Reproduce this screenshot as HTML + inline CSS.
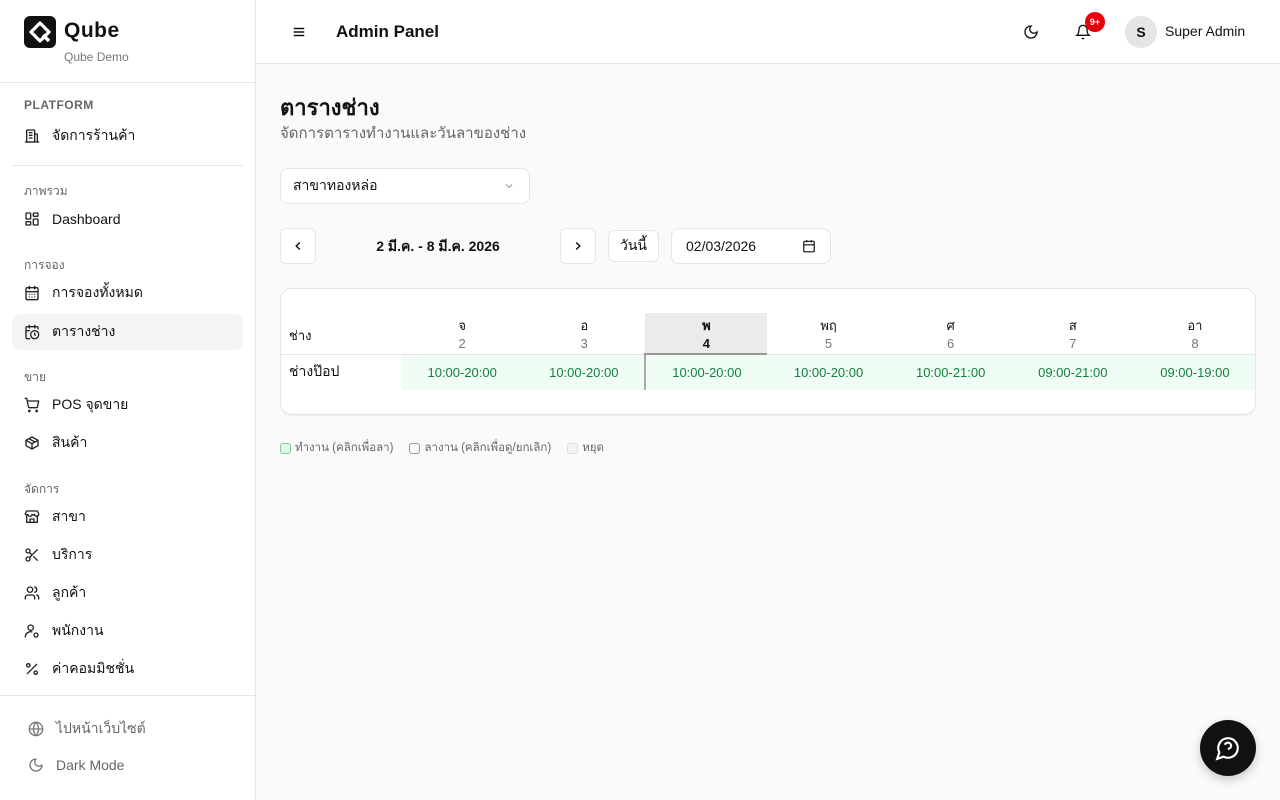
<!DOCTYPE html>
<html><head><meta charset="utf-8"><style>
*{box-sizing:border-box;margin:0;padding:0}
body{width:1280px;height:800px;font-family:"Liberation Sans","Noto Sans CJK SC",sans-serif;background:#fafafa;color:#111;position:relative;overflow:hidden}
.sb{position:absolute;left:0;top:0;width:256px;height:800px;background:#fff;border-right:1px solid #e5e5e5}
.logo{position:absolute;left:24px;top:16px;width:32px;height:32px;background:#111;border-radius:6px}
.brand{position:absolute;left:64px;top:19px;font-size:21px;font-weight:bold;letter-spacing:.5px}
.sub{position:absolute;left:64px;top:50px;font-size:12px;color:#777}
.hr{position:absolute;height:1px;background:#e5e5e5}
.sec{position:absolute;left:24px;font-size:12px;color:#666}
.it{position:absolute;left:12px;width:231px;height:36px;border-radius:8px;display:flex;align-items:center;padding-left:12px;font-size:14px;font-weight:500;color:#111}
.it svg{width:16px;height:16px;margin-right:12px;fill:none;stroke:#222;stroke-width:2;stroke-linecap:round;stroke-linejoin:round}
.it.act{background:#f4f4f5}
.it.g{color:#666}.it.g svg{stroke:#777}
.hd{position:absolute;left:256px;top:0;right:0;height:64px;background:#fff;border-bottom:1px solid #e5e5e5}
.main{position:absolute;left:280px}
.btn{position:absolute;background:#fff;border:1px solid #e5e5e5;border-radius:6px;display:flex;align-items:center;justify-content:center;font-size:14px}
table{border-collapse:collapse;position:absolute;left:0;top:24px;width:975px;table-layout:fixed}
td,th{text-align:center;font-size:13px;font-weight:normal}
.gr{background:#f0fdf4}
</style></head><body>
<div class="sb">
 <div class="logo"><svg width="32" height="32" viewBox="0 0 32 32"><path d="M16 7 L25 16 L16 25 L7 16Z" fill="none" stroke="#fff" stroke-width="3.2" stroke-linejoin="round"/><path d="M19 19 L25 25" stroke="#fff" stroke-width="3.5"/></svg></div>
 <div class="brand">Qube</div>
 <div class="sub">Qube Demo</div>
 <div class="hr" style="left:0;width:256px;top:82px"></div>
 <div class="sec" style="top:98px;font-weight:bold;letter-spacing:.5px">PLATFORM</div>
 <div class="it" style="top:118px"><svg viewBox="0 0 24 24"><rect x="4" y="3" width="12" height="18" rx="1"/><path d="M16 9h4v12h-4M8 7h4M8 11h4M8 15h4M2 21h20"/></svg>จัดการร้านค้า</div>
 <div class="hr" style="left:12px;width:231px;top:165px"></div>
 <div class="sec" style="top:182px">ภาพรวม</div>
 <div class="it" style="top:201px"><svg viewBox="0 0 24 24"><rect x="3" y="3" width="7" height="9" rx="1"/><rect x="14" y="3" width="7" height="5" rx="1"/><rect x="14" y="12" width="7" height="9" rx="1"/><rect x="3" y="16" width="7" height="5" rx="1"/></svg>Dashboard</div>
 <div class="sec" style="top:256px">การจอง</div>
 <div class="it" style="top:275px"><svg viewBox="0 0 24 24"><rect x="3" y="4" width="18" height="18" rx="2"/><path d="M16 2v4M8 2v4M3 10h18M8 14h.01M12 14h.01M16 14h.01M8 18h.01M12 18h.01M16 18h.01"/></svg>การจองทั้งหมด</div>
 <div class="it act" style="top:314px"><svg viewBox="0 0 24 24"><path d="M21 7.5V6a2 2 0 0 0-2-2H5a2 2 0 0 0-2 2v14a2 2 0 0 0 2 2h3.5M16 2v4M8 2v4M3 10h5"/><circle cx="16" cy="16" r="6"/><path d="M16 14v2l1 1"/></svg>ตารางช่าง</div>
 <div class="sec" style="top:368px">ขาย</div>
 <div class="it" style="top:387px"><svg viewBox="0 0 24 24"><circle cx="8" cy="21" r="1"/><circle cx="19" cy="21" r="1"/><path d="M2 2h2l2.6 12.4a2 2 0 0 0 2 1.6h9.7a2 2 0 0 0 2-1.6L22 6H5"/></svg>POS จุดขาย</div>
 <div class="it" style="top:425px"><svg viewBox="0 0 24 24"><path d="M21 8l-9-5-9 5v8l9 5 9-5z"/><path d="M3 8l9 5 9-5M12 13v8M7.5 5.5l9 5"/></svg>สินค้า</div>
 <div class="sec" style="top:480px">จัดการ</div>
 <div class="it" style="top:499px"><svg viewBox="0 0 24 24"><path d="M4 10v10h16V10M2 7l2-4h16l2 4v1a3 3 0 0 1-6 0 3 3 0 0 1-4 0 3 3 0 0 1-6 0 3 3 0 0 1-4 0z"/><path d="M9 20v-5h6v5"/></svg>สาขา</div>
 <div class="it" style="top:537px"><svg viewBox="0 0 24 24"><circle cx="6" cy="6" r="3"/><circle cx="6" cy="18" r="3"/><path d="M20 4L8.1 15.9M14.5 14.5L20 20M8.1 8.1L12 12"/></svg>บริการ</div>
 <div class="it" style="top:575px"><svg viewBox="0 0 24 24"><circle cx="9" cy="7" r="4"/><path d="M2 21v-2a4 4 0 0 1 4-4h6a4 4 0 0 1 4 4v2M16 3.1a4 4 0 0 1 0 7.8M22 21v-2a4 4 0 0 0-3-3.9"/></svg>ลูกค้า</div>
 <div class="it" style="top:613px"><svg viewBox="0 0 24 24"><circle cx="10" cy="7" r="4"/><path d="M2 21a8 8 0 0 1 10-7.7"/><circle cx="18" cy="18" r="3"/></svg>พนักงาน</div>
 <div class="it" style="top:651px"><svg viewBox="0 0 24 24"><path d="M19 5L5 19"/><circle cx="6.5" cy="6.5" r="2.5"/><circle cx="17.5" cy="17.5" r="2.5"/></svg>ค่าคอมมิชชั่น</div>
 <div class="hr" style="left:0;width:256px;top:695px"></div>
 <div class="it g" style="top:711px;left:16px"><svg viewBox="0 0 24 24"><circle cx="12" cy="12" r="10"/><path d="M2 12h20M12 2a15 15 0 0 1 0 20 15 15 0 0 1 0-20"/></svg>ไปหน้าเว็บไซต์</div>
 <div class="it g" style="top:747px;left:16px"><svg viewBox="0 0 24 24"><path d="M12 3a6 6 0 0 0 9 9 9 9 0 1 1-9-9z"/></svg>Dark Mode</div>
</div>
<div class="hd">
 <svg style="position:absolute;left:36px;top:25px" width="14" height="14" viewBox="0 0 24 24" fill="none" stroke="#111" stroke-width="2.5"><path d="M3 6h18M3 12h18M3 18h18"/></svg>
 <div style="position:absolute;left:80px;top:22px;font-size:17px;font-weight:bold">Admin Panel</div>
 <svg style="position:absolute;left:767px;top:24px" width="16" height="16" viewBox="0 0 24 24" fill="none" stroke="#111" stroke-width="2"><path d="M12 3a6 6 0 0 0 9 9 9 9 0 1 1-9-9z"/></svg>
 <svg style="position:absolute;left:819px;top:24px" width="16" height="16" viewBox="0 0 24 24" fill="none" stroke="#111" stroke-width="2"><path d="M6 8a6 6 0 0 1 12 0c0 7 3 9 3 9H3s3-2 3-9M10.3 21a1.9 1.9 0 0 0 3.4 0"/></svg>
 <div style="position:absolute;left:829px;top:12px;width:20px;height:20px;border-radius:10px;background:#e7000b;color:#fff;font-size:9px;font-weight:bold;text-align:center;line-height:20px">9+</div>
 <div style="position:absolute;left:869px;top:16px;width:32px;height:32px;border-radius:16px;background:#e5e5e5;text-align:center;line-height:32px;font-size:14px;font-weight:bold">S</div>
 <div style="position:absolute;left:909px;top:23px;font-size:14px;font-weight:500">Super Admin</div>
</div>
<div class="main" style="top:90px;font-size:22px;font-weight:bold">ตารางช่าง</div>
<div class="main" style="top:121px;font-size:15px;color:#666">จัดการตารางทำงานและวันลาของช่าง</div>
<div class="btn" style="left:280px;top:168px;width:250px;height:36px;justify-content:space-between;padding:0 14px 0 12px;border-radius:8px">สาขาทองหล่อ<svg width="12" height="12" viewBox="0 0 24 24" fill="none" stroke="#999" stroke-width="2"><path d="M6 9l6 6 6-6"/></svg></div>
<div class="btn" style="left:280px;top:228px;width:36px;height:36px"><svg width="14" height="14" viewBox="0 0 24 24" fill="none" stroke="#111" stroke-width="2.5"><path d="M15 18l-6-6 6-6"/></svg></div>
<div style="position:absolute;left:316px;top:236px;width:244px;text-align:center;font-size:14px;font-weight:bold">2 มี.ค. - 8 มี.ค. 2026</div>
<div class="btn" style="left:560px;top:228px;width:36px;height:36px"><svg width="14" height="14" viewBox="0 0 24 24" fill="none" stroke="#111" stroke-width="2.5"><path d="M9 18l6-6-6-6"/></svg></div>
<div class="btn" style="left:608px;top:230px;width:51px;height:32px;font-weight:500">วันนี้</div>
<div class="btn" style="left:671px;top:228px;width:160px;height:36px;justify-content:space-between;padding:0 14px;border-radius:8px">02/03/2026<svg width="14" height="14" viewBox="0 0 24 24" fill="none" stroke="#111" stroke-width="2"><rect x="3" y="4" width="18" height="18" rx="2"/><path d="M16 2v4M8 2v4M3 10h18"/></svg></div>
<div style="position:absolute;left:280px;top:288px;width:976px;height:127px;background:#fff;border:1px solid #e5e5e5;border-radius:12px;box-shadow:0 1px 2px rgba(0,0,0,.06);overflow:hidden">
<table>
<colgroup><col style="width:120px"><col span="7" style="width:122px"></colgroup>
<tr style="height:41px;border-bottom:1px solid #e5e5e5"><th style="text-align:left;padding-left:8px;font-weight:500;vertical-align:middle;padding-top:4px">ช่าง</th>
<th><b style="font-weight:500">จ</b><br><span style="color:#777">2</span></th><th><b style="font-weight:500">อ</b><br><span style="color:#777">3</span></th><th style="background:#ebebeb;border-bottom:2px solid #999"><b>พ</b><br><b>4</b></th><th><b style="font-weight:500">พฤ</b><br><span style="color:#777">5</span></th><th><b style="font-weight:500">ศ</b><br><span style="color:#777">6</span></th><th><b style="font-weight:500">ส</b><br><span style="color:#777">7</span></th><th><b style="font-weight:500">อา</b><br><span style="color:#777">8</span></th></tr>
<tr style="height:36px;color:#15803d"><td style="text-align:left;padding-left:8px;color:#111;font-weight:500;font-size:14px">ช่างป๊อป</td><td class="gr">10:00-20:00</td><td class="gr">10:00-20:00</td><td class="gr" style="border-left:2px solid #aaa">10:00-20:00</td><td class="gr">10:00-20:00</td><td class="gr">10:00-21:00</td><td class="gr">09:00-21:00</td><td class="gr">09:00-19:00</td></tr>
</table></div>
<div style="position:absolute;left:280px;top:439px;font-size:11.5px;color:#666;display:flex;align-items:center;gap:4px">
<span style="width:11px;height:11px;border:1px solid #86c79a;background:#dcfce7;border-radius:3px;display:inline-block"></span>ทำงาน (คลิกเพื่อลา)
<span style="width:11px;height:11px;border:1px solid #999;border-radius:3px;display:inline-block;margin-left:12px"></span>ลางาน (คลิกเพื่อดู/ยกเลิก)
<span style="width:11px;height:11px;border:1px solid #ddd;background:#f4f4f4;border-radius:3px;display:inline-block;margin-left:12px"></span>หยุด</div>
<div style="position:absolute;left:1200px;top:720px;width:56px;height:56px;border-radius:28px;background:#111;box-shadow:0 4px 10px rgba(0,0,0,.2);display:flex;align-items:center;justify-content:center"><svg width="26" height="26" viewBox="0 0 24 24" fill="none" stroke="#fff" stroke-width="2"><path d="M7.9 20A9 9 0 1 0 4 16.1L2 22z"/><path d="M9.1 9a3 3 0 0 1 5.8 1c0 2-3 3-3 3M12 17h.01"/></svg></div>
</body></html>
